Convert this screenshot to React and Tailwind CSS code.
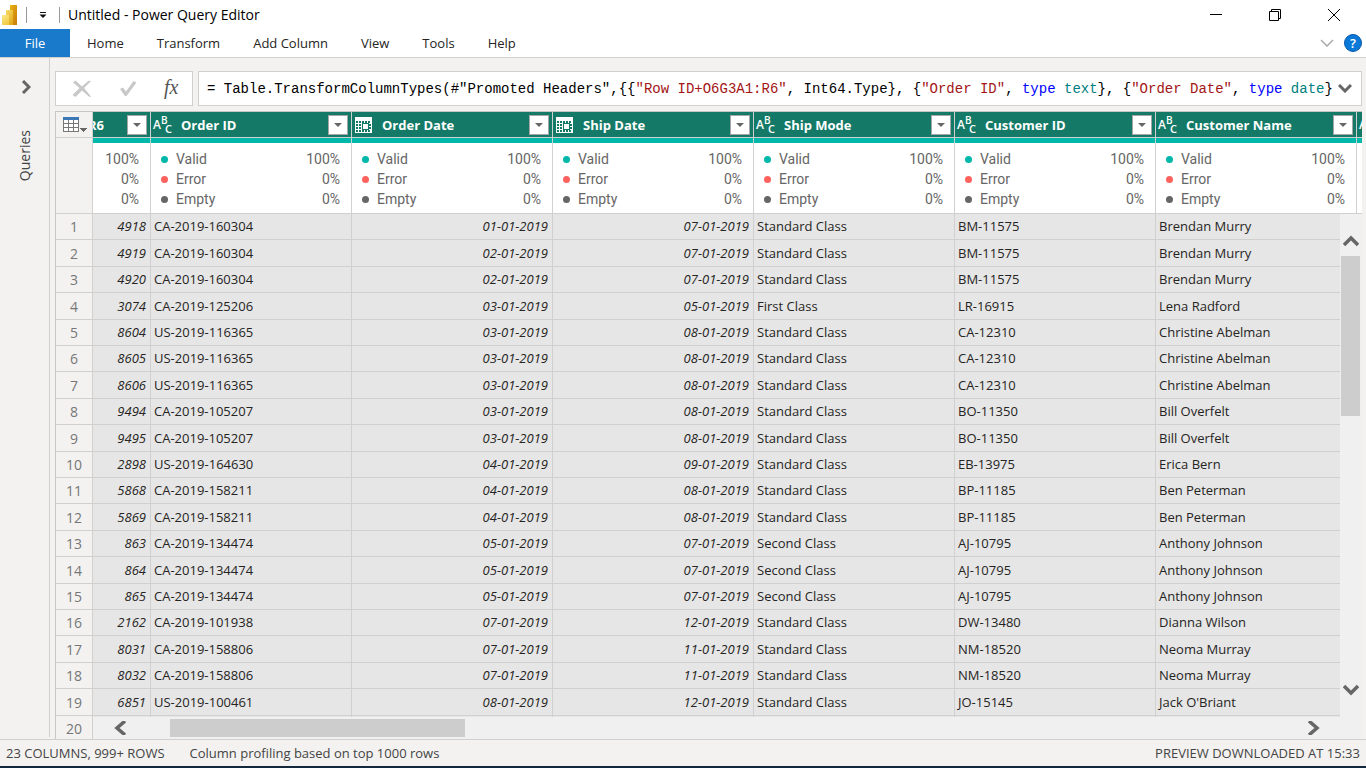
const COLUMNS = [
  { name: 'Order ID', type: 'text' },
  { name: 'Order Date', type: 'date' },
  { name: 'Ship Date', type: 'date' },
  { name: 'Ship Mode', type: 'text' },
  { name: 'Customer ID', type: 'text' },
  { name: 'Customer Name', type: 'text' },
];

const ROWS = [
  ['4918', 'CA-2019-160304', '01-01-2019', '07-01-2019', 'Standard Class', 'BM-11575', 'Brendan Murry'],
  ['4919', 'CA-2019-160304', '02-01-2019', '07-01-2019', 'Standard Class', 'BM-11575', 'Brendan Murry'],
  ['4920', 'CA-2019-160304', '02-01-2019', '07-01-2019', 'Standard Class', 'BM-11575', 'Brendan Murry'],
  ['3074', 'CA-2019-125206', '03-01-2019', '05-01-2019', 'First Class', 'LR-16915', 'Lena Radford'],
  ['8604', 'US-2019-116365', '03-01-2019', '08-01-2019', 'Standard Class', 'CA-12310', 'Christine Abelman'],
  ['8605', 'US-2019-116365', '03-01-2019', '08-01-2019', 'Standard Class', 'CA-12310', 'Christine Abelman'],
  ['8606', 'US-2019-116365', '03-01-2019', '08-01-2019', 'Standard Class', 'CA-12310', 'Christine Abelman'],
  ['9494', 'CA-2019-105207', '03-01-2019', '08-01-2019', 'Standard Class', 'BO-11350', 'Bill Overfelt'],
  ['9495', 'CA-2019-105207', '03-01-2019', '08-01-2019', 'Standard Class', 'BO-11350', 'Bill Overfelt'],
  ['2898', 'US-2019-164630', '04-01-2019', '09-01-2019', 'Standard Class', 'EB-13975', 'Erica Bern'],
  ['5868', 'CA-2019-158211', '04-01-2019', '08-01-2019', 'Standard Class', 'BP-11185', 'Ben Peterman'],
  ['5869', 'CA-2019-158211', '04-01-2019', '08-01-2019', 'Standard Class', 'BP-11185', 'Ben Peterman'],
  ['863', 'CA-2019-134474', '05-01-2019', '07-01-2019', 'Second Class', 'AJ-10795', 'Anthony Johnson'],
  ['864', 'CA-2019-134474', '05-01-2019', '07-01-2019', 'Second Class', 'AJ-10795', 'Anthony Johnson'],
  ['865', 'CA-2019-134474', '05-01-2019', '07-01-2019', 'Second Class', 'AJ-10795', 'Anthony Johnson'],
  ['2162', 'CA-2019-101938', '07-01-2019', '12-01-2019', 'Standard Class', 'DW-13480', 'Dianna Wilson'],
  ['8031', 'CA-2019-158806', '07-01-2019', '11-01-2019', 'Standard Class', 'NM-18520', 'Neoma Murray'],
  ['8032', 'CA-2019-158806', '07-01-2019', '11-01-2019', 'Standard Class', 'NM-18520', 'Neoma Murray'],
  ['6851', 'US-2019-100461', '08-01-2019', '12-01-2019', 'Standard Class', 'JO-15145', "Jack O'Briant"],
  ['', '', '', '', '', '', ''],
];

const ROW_HEIGHTS = ['h-[26px]', 'h-[27px]', 'h-[26px]', 'h-[27px]', 'h-[26px]'];

const QUALITY = [
  { label: 'Valid', value: '100%', dot: 'bg-[#01b8aa]' },
  { label: 'Error', value: '0%', dot: 'bg-[#fd625e]' },
  { label: 'Empty', value: '0%', dot: 'bg-[#666666]' },
];

function PowerBiLogo() {
  return (
    <svg width="16" height="20" viewBox="0 0 16 20" aria-hidden="true">
      <defs>
        <linearGradient id="bar3" x1="0" y1="0" x2="1" y2="1">
          <stop offset="0" stopColor="#e8b10f" />
          <stop offset="1" stopColor="#c77b0b" />
        </linearGradient>
        <linearGradient id="bar2" x1="0" y1="0" x2="0.6" y2="1">
          <stop offset="0" stopColor="#f8dd69" />
          <stop offset="1" stopColor="#e3ab1d" />
        </linearGradient>
        <linearGradient id="bar1" x1="0" y1="0" x2="0.6" y2="1">
          <stop offset="0" stopColor="#fbe88c" />
          <stop offset="1" stopColor="#f1cb45" />
        </linearGradient>
      </defs>
      <rect x="8" y="0" width="7" height="20" rx="0.6" fill="url(#bar3)" />
      <path d="M4 5.500a.6.6 0 0 1 .6-.6H10.400a.6.6 0 0 1 .6.6V20H4z" fill="url(#bar2)" />
      <path d="M0 10.600a.6.6 0 0 1 .6-.6H6.400a.6.6 0 0 1 .6.6V20H.6a.6.6 0 0 1-.6-.6z" fill="url(#bar1)" />
    </svg>
  );
}

function TextTypeIcon() {
  return (
    <svg width="20" height="20" viewBox="0 0 20 20" aria-hidden="true" className="shrink-0 overflow-visible fill-white font-['Open_Sans',sans-serif] font-semibold">
      <text x="0" y="14" fontSize="12">A</text>
      <text x="8" y="9" fontSize="10">B</text>
      <text x="12" y="18" fontSize="11">C</text>
    </svg>
  );
}

function DateTypeIcon() {
  return (
    <svg width="20" height="20" viewBox="0 0 20 20" aria-hidden="true" shapeRendering="crispEdges" className="shrink-0">
      <rect x="1" y="2" width="17" height="16" fill="#fff" />
      <g fill="#147a67">
        <path d="M2 6h2v2H2zM5 6h2v2H5zM8 6h2v2H8zM11 6h2v2h-2zM14 6h2v2h-2z" />
        <path d="M2 9h2v2H2zM5 9h2v2H5zM2 12h2v2H2zM5 12h2v2H5z" />
        <path d="M2 15h2v2H2zM5 15h2v2H5zM8 15h2v2H8zM11 15h2v2h-2zM14 15h2v2h-2z" />
        <path d="M15 9h2v2h-2zM15 12h2v2h-2z" />
        <rect x="8" y="8" width="7" height="7" />
      </g>
      <rect x="9" y="9" width="5" height="5" fill="#fff" />
    </svg>
  );
}

function FilterButton({ column }) {
  return (
    <button type="button" aria-label={`Filter ${column}`} className="flex size-5 shrink-0 items-center justify-center border border-[#a6a6a6] bg-white">
      <svg width="8" height="4" viewBox="0 0 8 4" aria-hidden="true"><path d="M0 0h8L4 4z" fill="#666" /></svg>
    </button>
  );
}

function Chevron({ d, width, height, stroke = '#666', strokeWidth = 3 }) {
  return (
    <svg width={width} height={height} viewBox={`0 0 ${width} ${height}`} fill="none" stroke={stroke} strokeWidth={strokeWidth} aria-hidden="true">
      <path d={d} />
    </svg>
  );
}

function TitleBar() {
  return (
    <header className="flex h-[29px] shrink-0 items-center bg-white pl-0.5">
      <PowerBiLogo />
      <span className="ml-2 h-4 w-px bg-[#999]" />
      <button type="button" aria-label="Customize toolbar" className="ml-3 flex h-4 w-2 items-center">
        <svg width="8" height="6" viewBox="0 0 8 6" aria-hidden="true"><path d="M1 0h6v1H1zM.5 2.500h7L4 6z" fill="#111" /></svg>
      </button>
      <span className="ml-3 h-4 w-px bg-[#999]" />
      <h1 className="ml-2 text-sm leading-5 text-black">Untitled - Power Query Editor</h1>
      <div className="ml-auto flex items-center gap-[47px] pr-[26px]">
        <button type="button" aria-label="Minimize">
          <svg width="12" height="12" viewBox="0 0 12 12" aria-hidden="true"><path d="M0 5.500h12" stroke="#000" /></svg>
        </button>
        <button type="button" aria-label="Restore">
          <svg width="12" height="12" viewBox="0 0 12 12" fill="none" stroke="#000" aria-hidden="true"><path d="M.5 2.500h9v9h-9zM2.500 2.500v-2h9v9h-2" /></svg>
        </button>
        <button type="button" aria-label="Close">
          <svg width="12" height="12" viewBox="0 0 12 12" stroke="#000" aria-hidden="true"><path d="M0 0l12 12M12 0L0 12" /></svg>
        </button>
      </div>
    </header>
  );
}

function Menu() {
  return (
    <nav className="flex h-[29px] shrink-0 items-stretch border-b border-[#d2d0ce] bg-white text-[13px] text-[#252423]">
      <button type="button" className="w-[70px] bg-[#1979ca] pt-0.5 text-white">File</button>
      <div className="flex items-center gap-[33px] pl-[17px] pt-0.5">
        {['Home', 'Transform', 'Add Column', 'View', 'Tools', 'Help'].map((item) => (
          <button key={item} type="button">{item}</button>
        ))}
      </div>
      <div className="ml-auto flex items-center gap-[10px] pr-1">
        <button type="button" aria-label="Collapse ribbon">
          <Chevron width={14} height={8} d="M1 1l6 6 6-6" stroke="#aaa" strokeWidth={1.5} />
        </button>
        <button type="button" aria-label="Help" className="flex size-[18px] items-center justify-center rounded-full border border-[#0a5cad] bg-[#0a78d7] text-[13px] font-semibold leading-4 text-white">?</button>
      </div>
    </nav>
  );
}

function FormulaBar() {
  return (
    <div className="flex h-[35px] shrink-0 gap-[5px]">
      <div className="flex w-[138px] items-center gap-[27px] border border-[#d2d0ce] bg-white pl-4">
        <button type="button" aria-label="Cancel">
          <svg width="20" height="18" viewBox="0 0 20 18" aria-hidden="true"><path d="M1 2.500L3.500.5 10 6.500 16.500.8 19 1 12 8l7 8.500-1.500.5L10 10.500 3.500 17 .5 15l7-7z" fill="#c8c8c8" /></svg>
        </button>
        <button type="button" aria-label="Apply">
          <svg width="18" height="16" viewBox="0 0 18 16" aria-hidden="true"><path d="M1 8l3-1.500 3 4L14.500 0 17.500 1.500 7.500 15H6z" fill="#c8c8c8" /></svg>
        </button>
        <button type="button" aria-label="Insert step" className="pb-1 font-['Liberation_Serif',serif] text-xl italic leading-5 text-[#555]">fx</button>
      </div>
      <div className="flex min-w-0 flex-1 items-center justify-between border border-[#d2d0ce] bg-white pl-2 pr-[9px]">
        <code role="textbox" aria-label="Formula" tabIndex={0} className="whitespace-pre font-['Liberation_Mono',monospace] text-sm leading-5 text-black">
          {'= Table.TransformColumnTypes(#"Promoted Headers",{{'}
          <span className="text-[#a31515]">"Row ID+O6G3A1:R6"</span>
          {', Int64.Type}, {'}
          <span className="text-[#a31515]">"Order ID"</span>
          {', '}
          <span className="text-[#0000ff]">type</span> <span className="text-[#008080]">text</span>
          {'}, {'}
          <span className="text-[#a31515]">"Order Date"</span>
          {', '}
          <span className="text-[#0000ff]">type</span> <span className="text-[#008080]">date</span>
          {'}'}
        </code>
        <button type="button" aria-label="Expand formula bar" className="shrink-0">
          <Chevron width={14} height={9} d="M1 1l6 6 6-6" />
        </button>
      </div>
    </div>
  );
}

function HeaderCell({ column }) {
  return (
    <th className="border-b border-r border-[#d0d0d0] bg-white p-0 text-left font-normal">
      <div className="flex h-[26px] items-center border-b border-[#d0d0d0] bg-[#147a67] pl-0.5 pr-[3px]">
        {column.type === 'date' ? <DateTypeIcon /> : <TextTypeIcon />}
        <span className="ml-2 flex-1 text-[13px] font-bold leading-5 text-white">{column.name}</span>
        {column.name && <FilterButton column={column.name} />}
      </div>
      <div className="h-[5px] bg-[#01b8aa]" />
      <ul className="h-[70px] pl-[10px] pr-[11px] pt-[6px] font-[Roboto,sans-serif] text-sm leading-5 text-[#666]">
        {column.name && QUALITY.map((q) => (
          <li key={q.label} className="flex items-center">
            <span className={`size-[7px] rounded-full ${q.dot}`} />
            <span className="ml-2 flex-1">{q.label}</span>
            <span>{q.value}</span>
          </li>
        ))}
      </ul>
    </th>
  );
}

function DataGrid() {
  const cell = 'border-b border-r border-[#d0d0d0] bg-[#e6e6e6] pb-px pl-[3px] pr-1 pt-0';
  return (
    <div className="relative min-h-0 flex-1 overflow-hidden border-l border-t border-[#c8c6c4]">
      <table className="w-[1502px] table-fixed border-separate border-spacing-0 text-[13px] leading-5 text-[#252423]">
        <colgroup>
          <col className="w-[37px]" />
          <col className="w-[58px]" />
          {COLUMNS.map((c) => <col key={c.name} className="w-[201px]" />)}
          <col className="w-[201px]" />
        </colgroup>
        <thead>
          <tr>
            <th className="border-b border-r border-[#d0d0d0] p-0 align-top font-normal">
              <button type="button" aria-label="Table options" className="flex h-[26px] w-full items-center border-b border-[#d0d0d0] pl-[7px]">
                <svg width="25" height="16" viewBox="0 0 25 16" aria-hidden="true" shapeRendering="crispEdges">
                  <path d="M0 0h16v15H0z" fill="#777" />
                  <path d="M0 0h16v3H0z" fill="#3b78b5" />
                  <path d="M1 3h4v3H1zM6 3h4v3H6zM11 3h4v3h-4zM1 7h4v3H1zM6 7h4v3H6zM11 7h4v3h-4zM1 11h4v3H1zM6 11h4v3H6zM11 11h4v3h-4z" fill="#fff" />
                  <path d="M17 11h7l-3.500 4z" fill="#666" />
                </svg>
              </button>
            </th>
            <th className="border-b border-r border-[#d0d0d0] bg-white p-0 font-normal">
              <div className="flex h-[26px] items-center justify-between border-b border-[#d0d0d0] bg-[#147a67] pr-[3px]">
                <span className="flex w-[11px] justify-end overflow-hidden font-bold text-white">R6</span>
                <FilterButton column="Row ID" />
              </div>
              <div className="h-[5px] bg-[#01b8aa]" />
              <ul className="h-[70px] pr-[11px] pt-[6px] text-right font-[Roboto,sans-serif] text-sm leading-5 text-[#666]">
                {QUALITY.map((q) => <li key={q.label}>{q.value}</li>)}
              </ul>
            </th>
            {COLUMNS.map((c) => <HeaderCell key={c.name} column={c} />)}
            <HeaderCell column={{ name: '', type: 'text' }} />
          </tr>
        </thead>
        <tbody>
          {ROWS.map((row, i) => (
            <tr key={i} className={ROW_HEIGHTS[i % 5]}>
              <th scope="row" className="border-b border-r border-[#d0d0d0] p-0 pt-px text-center text-sm font-normal leading-5 text-[#777]">{i + 1}</th>
              {row.map((value, j) => (
                <td key={j} className={j === 0 || j === 2 || j === 3 ? `${cell} text-right italic` : cell}>{value}</td>
              ))}
              <td className={cell} />
            </tr>
          ))}
        </tbody>
      </table>

      <div className="absolute bottom-0 right-0 top-[102px] flex w-[22px] flex-col items-center bg-[#f0f0f0] pb-[43px] pt-[21px]">
        <button type="button" aria-label="Scroll up" className="flex"><Chevron width={16} height={12} d="M1 10l7-7 7 7" strokeWidth={3.5} /></button>
        <div className="ml-px mt-[9px] h-[160px] w-[19px] self-start bg-[#cdcdcd]" />
        <button type="button" aria-label="Scroll down" className="mt-auto flex"><Chevron width={16} height={12} d="M1 2l7 7 7-7" strokeWidth={3.5} /></button>
      </div>
      <div className="absolute bottom-0 left-[37px] right-0 flex h-[22px] items-center bg-[#f0f0f0] pl-[21px] pr-[42px]">
        <button type="button" aria-label="Scroll left"><Chevron width={12} height={14} d="M11 0L3 7l8 7" strokeWidth={3.5} /></button>
        <div className="ml-[44px] h-[18px] w-[295px] bg-[#cdcdcd]" />
        <button type="button" aria-label="Scroll right" className="ml-auto"><Chevron width={12} height={14} d="M1 0l8 7-8 7" strokeWidth={3.5} /></button>
      </div>
    </div>
  );
}

export default function App() {
  return (
    <div className="flex h-screen flex-col overflow-hidden bg-[#f3f2f1] font-['Open_Sans',sans-serif]">
      <TitleBar />
      <Menu />
      <div className="flex min-h-0 flex-1">
        <aside className="mb-0.5 flex w-[50px] shrink-0 flex-col items-center border-r border-[#d0d0d0] pt-[22px]">
          <button type="button" aria-label="Expand queries"><Chevron width={12} height={14} d="M4 1l6 6-6 6" /></button>
          <h2 className="mt-9 rotate-180 text-sm leading-5 text-[#444] [writing-mode:vertical-rl]">Queries</h2>
        </aside>
        <main className="flex min-w-0 flex-1 flex-col gap-[5px] pl-[5px] pr-1 pt-[13px]">
          <FormulaBar />
          <DataGrid />
        </main>
      </div>
      <footer className="flex h-[29px] shrink-0 items-center gap-[25px] border-b-2 border-t border-b-[#14283d] border-t-[#d0d0d0] px-[6px] text-[13px] leading-5 text-[#444]">
        <span>23 COLUMNS, 999+ ROWS</span>
        <span>Column profiling based on top 1000 rows</span>
        <span className="ml-auto">PREVIEW DOWNLOADED AT 15:33</span>
      </footer>
    </div>
  );
}
